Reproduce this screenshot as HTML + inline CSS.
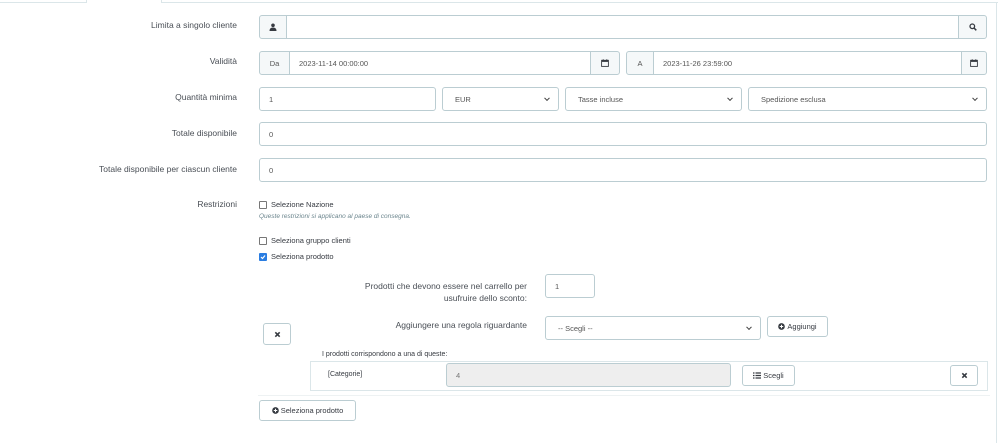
<!DOCTYPE html>
<html><head><meta charset="utf-8"><style>
*{box-sizing:border-box;margin:0;padding:0}
body{width:1000px;height:443px;background:#fff;font-family:"Liberation Sans",sans-serif;font-size:8px;color:#363a41;position:relative;overflow:hidden}
.a{position:absolute}
.lbl{position:absolute;text-align:right;font-size:8.5px;color:#4a4f56}
.in{position:absolute;border:1px solid #bbcdd2;border-radius:3px;background:#fff;font-size:7.5px;color:#555;padding-left:9px;display:flex;align-items:center}
.ad{position:absolute;background:#f5f8f9;border:1px solid #bbcdd2;display:flex;align-items:center;justify-content:center;font-size:7.5px;color:#555}
.sel::after{content:"";position:absolute;right:9px;top:50%;width:3px;height:3px;border-right:1.2px solid #444;border-bottom:1.2px solid #444;transform:translateY(-70%) rotate(45deg)}
.btn{position:absolute;border:1px solid #bbcdd2;border-radius:3px;background:#fff;display:flex;align-items:center;justify-content:center;font-size:7.5px;color:#363a41}
.cb{position:absolute;width:8px;height:8px;border:1px solid #777;border-radius:1px;background:#fff}
.ct{position:absolute;font-size:7.5px;color:#363a41}
</style></head><body>
<div class="a" style="left:0;top:2px;width:86px;height:1px;background:#dbe6e9"></div>
<div class="a" style="left:86px;top:0;width:1px;height:3px;background:#dbe6e9"></div>
<div class="a" style="left:161px;top:0;width:1px;height:3px;background:#dbe6e9"></div>
<div class="a" style="left:161px;top:2px;width:837px;height:1px;background:#dbe6e9"></div>
<div class="a" style="left:996px;top:2px;width:1px;height:441px;background:#dbe6e9"></div>

<svg width="0" height="0" style="position:absolute"><defs>
<symbol id="cal" viewBox="0 0 8 8"><rect x="0.6" y="1.3" width="6.8" height="6.1" fill="none" stroke="#363a41" stroke-width="0.9"/><rect x="0.6" y="1.3" width="6.8" height="1.6" fill="#363a41"/><path d="M2.2 0.3V2M5.8 0.3V2" stroke="#363a41" stroke-width="0.9"/></symbol>
<symbol id="pc" viewBox="0 0 8 8"><circle cx="4" cy="4" r="3.8" fill="#363a41"/><path d="M4 2V6M2 4H6" stroke="#fff" stroke-width="1.2"/></symbol>
<symbol id="xx" viewBox="0 0 8 8"><path d="M1.5 1.5L6.5 6.5M6.5 1.5L1.5 6.5" stroke="#363a41" stroke-width="1.8"/></symbol>
</defs></svg>

<div class="lbl" style="right:763px;top:20px">Limita a singolo cliente</div>
<div class="ad" style="left:259px;top:15px;width:28px;height:24px;border-radius:3px 0 0 3px"><svg width="8" height="8" viewBox="0 0 8 8"><circle cx="4" cy="2.3" r="1.8" fill="#363a41"/><path d="M0.5 8 Q0.5 4.5 4 4.5 Q7.5 4.5 7.5 8Z" fill="#363a41"/></svg></div>
<div class="in" style="left:286px;top:15px;width:673px;height:24px;border-radius:0"></div>
<div class="ad" style="left:958px;top:15px;width:29px;height:24px;border-radius:0 3px 3px 0"><svg width="8" height="8" viewBox="0 0 8 8"><circle cx="3.3" cy="3.3" r="2.3" fill="none" stroke="#363a41" stroke-width="1.3"/><path d="M5 5L7.3 7.3" stroke="#363a41" stroke-width="1.5"/></svg></div>

<div class="lbl" style="right:763px;top:56px">Validità</div>
<div class="ad" style="left:259px;top:51px;width:31px;height:24px;border-radius:3px 0 0 3px">Da</div>
<div class="in" style="left:289px;top:51px;width:302px;height:24px;border-radius:0">2023-11-14 00:00:00</div>
<div class="ad" style="left:590px;top:51px;width:30px;height:24px;border-radius:0 3px 3px 0"><svg width="8" height="8"><use href="#cal"/></svg></div>
<div class="ad" style="left:626px;top:51px;width:28px;height:24px;border-radius:3px 0 0 3px">A</div>
<div class="in" style="left:653px;top:51px;width:309px;height:24px;border-radius:0">2023-11-26 23:59:00</div>
<div class="ad" style="left:961px;top:51px;width:26px;height:24px;border-radius:0 3px 3px 0"><svg width="8" height="8"><use href="#cal"/></svg></div>

<div class="lbl" style="right:763px;top:92px">Quantità minima</div>
<div class="in" style="left:259px;top:87px;width:177px;height:24px">1</div>
<div class="in sel" style="left:442px;top:87px;width:117px;height:24px;padding-left:12px">EUR</div>
<div class="in sel" style="left:565px;top:87px;width:177px;height:24px;padding-left:12px">Tasse incluse</div>
<div class="in sel" style="left:748px;top:87px;width:239px;height:24px;padding-left:12px">Spedizione esclusa</div>

<div class="lbl" style="right:763px;top:128px">Totale disponibile</div>
<div class="in" style="left:259px;top:122px;width:728px;height:24px">0</div>
<div class="lbl" style="right:763px;top:164px">Totale disponibile per ciascun cliente</div>
<div class="in" style="left:259px;top:158px;width:728px;height:24px">0</div>

<div class="lbl" style="right:763px;top:199px">Restrizioni</div>
<div class="cb" style="left:259px;top:201px"></div><div class="ct" style="left:271px;top:200px">Selezione Nazione</div>
<div class="ct" style="left:259px;top:213px;font-style:italic;color:#6c868e;font-size:6.5px">Queste restrizioni si applicano al paese di consegna.</div>
<div class="cb" style="left:259px;top:237px"></div><div class="ct" style="left:271px;top:236px">Seleziona gruppo clienti</div>
<div class="cb" style="left:259px;top:253px;background:#2a7de1;border-color:#2a7de1"><svg width="6" height="6" viewBox="0 0 6 6" style="position:absolute;left:0;top:0"><path d="M1 3L2.5 4.5L5 1.5" stroke="#fff" stroke-width="1.2" fill="none"/></svg></div><div class="ct" style="left:271px;top:252px">Seleziona prodotto</div>

<div class="lbl" style="right:473px;top:280px;line-height:12px">Prodotti che devono essere nel carrello per<br>usufruire dello sconto:</div>
<div class="in" style="left:545px;top:274px;width:50px;height:24px">1</div>
<div class="lbl" style="right:473px;top:320px">Aggiungere una regola riguardante</div>
<div class="in sel" style="left:545px;top:316px;width:216px;height:24px;padding-left:12px">-- Scegli --</div>
<div class="btn" style="left:767px;top:316px;width:61px;height:21px"><svg width="7" height="7"><use href="#pc"/></svg><span style="margin-left:2px">Aggiungi</span></div>
<div class="btn" style="left:263px;top:323px;width:28px;height:22px"><svg width="7" height="7"><use href="#xx"/></svg></div>

<div class="ct" style="left:322px;top:351px;font-size:7px">I prodotti corrispondono a una di queste:</div>
<div class="a" style="left:310px;top:361px;width:678px;height:30px;border:1px solid #dbe6e9"></div>
<div class="ct" style="left:328px;top:371px;font-size:7px">[Categorie]</div>
<div class="in" style="left:446px;top:363px;width:285px;height:24px;background:#eee;color:#777">4</div>
<div class="btn" style="left:742px;top:365px;width:53px;height:21px"><svg width="8" height="7" viewBox="0 0 8 7"><path d="M0 1H1.5M2.5 1H8M0 3.5H1.5M2.5 3.5H8M0 6H1.5M2.5 6H8" stroke="#363a41" stroke-width="1.2"/></svg><span style="margin-left:2px">Scegli</span></div>
<div class="btn" style="left:950px;top:365px;width:28px;height:21px"><svg width="7" height="7"><use href="#xx"/></svg></div>
<div class="a" style="left:258px;top:395px;width:732px;height:1px;background:#eef2f3"></div>
<div class="btn" style="left:259px;top:400px;width:97px;height:21px"><svg width="7" height="7"><use href="#pc"/></svg><span style="margin-left:2px">Seleziona prodotto</span></div>
</body></html>
